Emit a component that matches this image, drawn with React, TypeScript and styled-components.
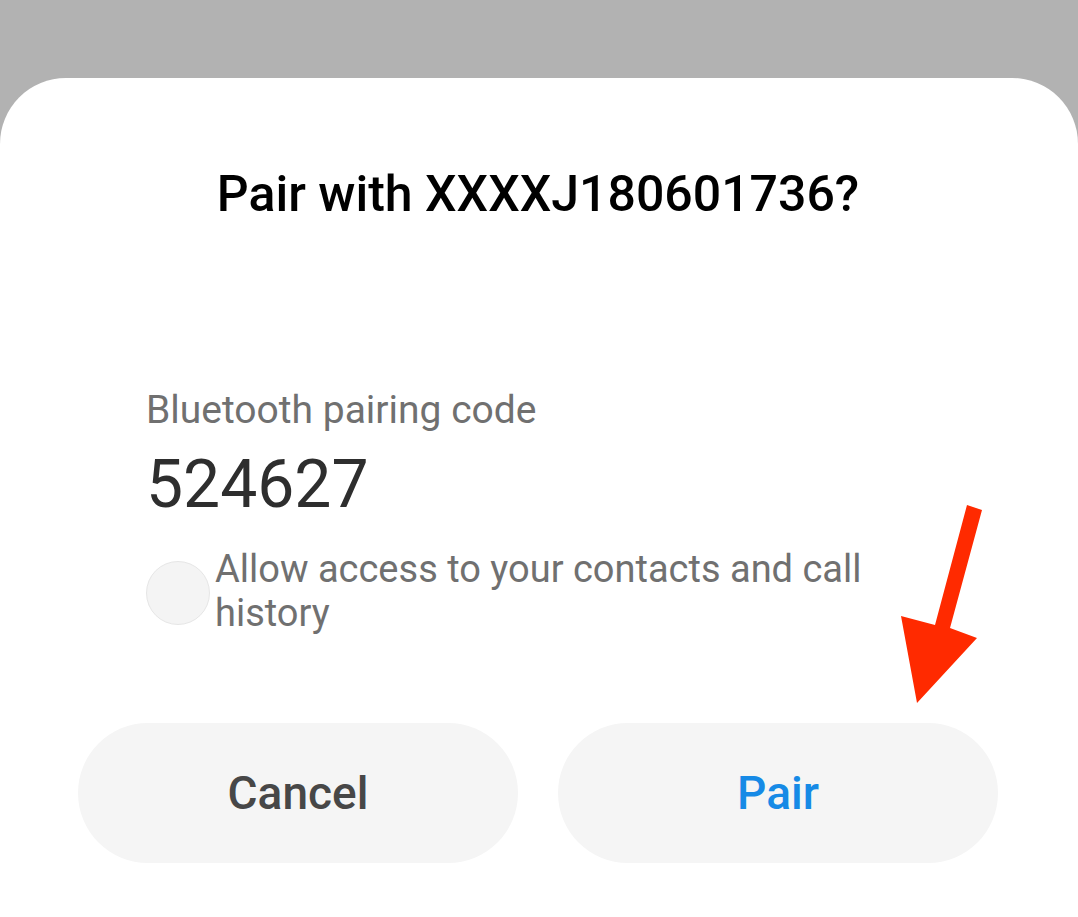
import { createGlobalStyle, styled } from "styled-components";

const GlobalStyle = createGlobalStyle`
    html, body {
        margin: 0;
        padding: 0;
        background: #b2b2b2;
        font-family: Roboto, "Noto Sans", sans-serif;
    }
    #root {
        height: 917px;
        display: flex;
        flex-direction: column;
    }
`;

const Screen = styled.div`
    height: 917px;
    display: flex;
    flex-direction: column;
    padding-top: 78px;
    box-sizing: border-box;
`;

const Sheet = styled.div`
    position: relative;
    flex: 1;
    background: #ffffff;
    border-radius: 66px 66px 0 0;
    display: flex;
    flex-direction: column;
    padding: 88px 80px 0 78px;
`;

const Title = styled.h1`
    margin: 0;
    text-align: center;
    font-size: 50px;
    font-weight: 500;
    color: #000;
    line-height: 56px;
`;

const Body = styled.div`
    display: flex;
    flex-direction: column;
    padding: 166px 0 0 68px;
`;

const Label = styled.div`
    font-size: 39px;
    color: #707070;
    line-height: 44px;
`;

const Code = styled.div`
    font-size: 66px;
    color: #2e2e2e;
    line-height: 80px;
    margin-top: 13px;
`;

const CheckRow = styled.div`
    display: flex;
    align-items: flex-start;
    margin-top: 22px;
`;

const Radio = styled.div`
    width: 62px;
    height: 62px;
    flex: none;
    border-radius: 50%;
    background: #f4f4f4;
    border: 1px solid #e6e6e6;
    margin-top: 14px;
    margin-right: 5px;
`;

const CheckText = styled.div`
    font-size: 38px;
    color: #707070;
    line-height: 44px;
    width: 700px;
`;

const Buttons = styled.div`
    display: flex;
    gap: 40px;
    margin-top: 88px;
`;

const Button = styled.button<{ $primary?: boolean }>`
    flex: 1;
    height: 140px;
    border: none;
    border-radius: 70px;
    background: #f5f5f5;
    font-family: Roboto, "Noto Sans", sans-serif;
    font-size: 46px;
    font-weight: 500;
    color: ${(p) => (p.$primary ? "#168ae6" : "#474747")};
`;

const Arrow = styled.svg`
    position: absolute;
    left: 890px;
    top: 420px;
    width: 100px;
    height: 210px;
`;

export default function App() {
    return (
        <>
            <GlobalStyle />
            <Screen>
                <Sheet>
                    <Title>Pair with XXXXJ180601736?</Title>
                    <Body>
                        <Label>Bluetooth pairing code</Label>
                        <Code>524627</Code>
                        <CheckRow>
                            <Radio />
                            <CheckText>Allow access to your contacts and call history</CheckText>
                        </CheckRow>
                    </Body>
                    <Buttons>
                        <Button>Cancel</Button>
                        <Button $primary>Pair</Button>
                    </Buttons>
                    <Arrow viewBox="890 498 100 210">
                        <polygon
                            points="967,505 982,510 950,628 977,638 917,703 901,616 935,625"
                            fill="#ff2a00"
                        />
                    </Arrow>
                </Sheet>
            </Screen>
        </>
    );
}
